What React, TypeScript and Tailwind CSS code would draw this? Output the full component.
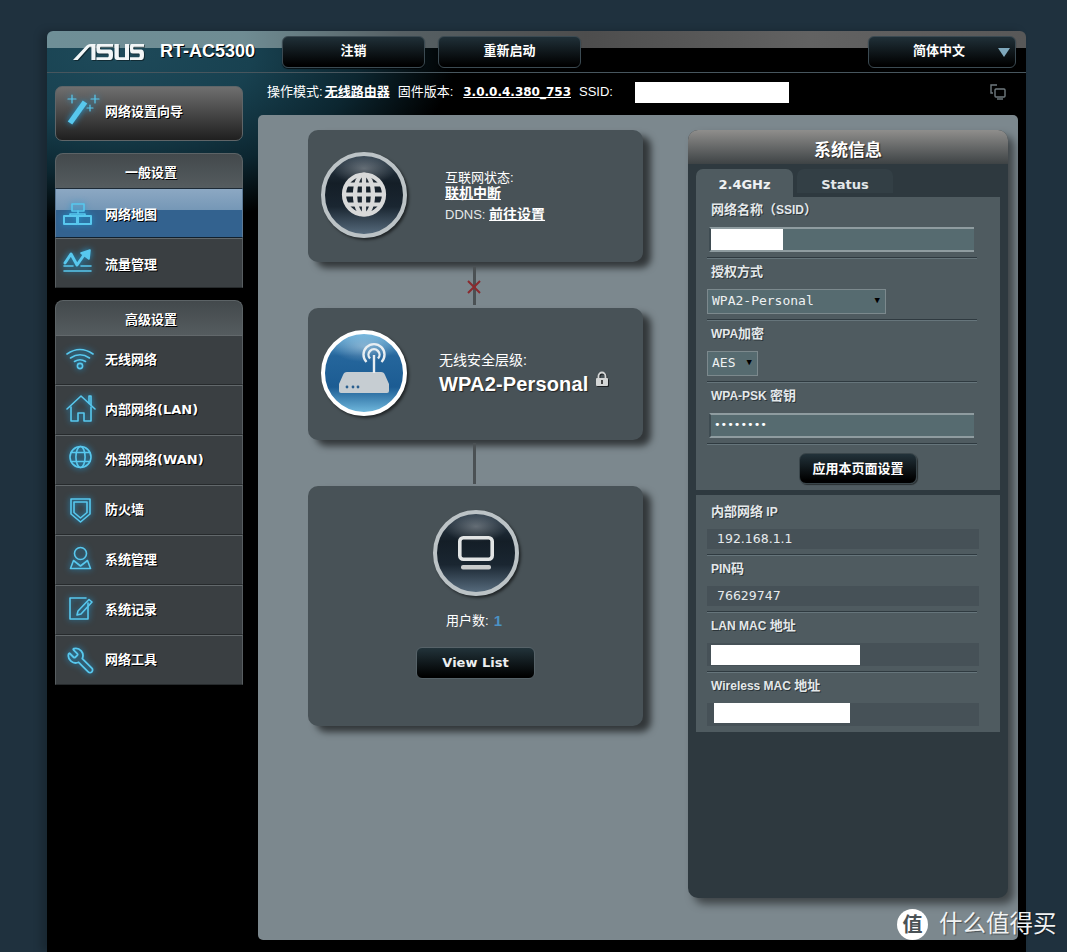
import { ReactNode } from "react";
import { Wrench } from "lucide-react";

const CJK = "font-['Liberation_Sans','Noto_Sans_CJK_SC',sans-serif]";
const WIDE = "font-['DejaVu_Sans','Noto_Sans_CJK_SC',sans-serif]";
const MONO = "font-['DejaVu_Sans_Mono','Noto_Sans_CJK_SC',monospace]";
const GLOW = "drop-shadow-[0_0_3px_#1f9ad6]";

function NavIcon({ children }: { children: ReactNode }) {
  return (
    <svg
      viewBox="0 0 40 40"
      className={`h-10 w-10 shrink-0 ${GLOW}`}
      fill="none"
      stroke="#58c8ee"
      strokeWidth="1.6"
      strokeLinejoin="round"
      strokeLinecap="round"
    >
      {children}
    </svg>
  );
}

const advancedItems: { label: string; icon: ReactNode }[] = [
  {
    label: "无线网络",
    icon: (
      <NavIcon>
        <path d="M7 14Q20 5 33 14" />
        <path d="M10.5 18Q20 11.5 29.5 18" />
        <path d="M14.5 21.5Q20 18 25.5 21.5" />
        <circle cx="20" cy="26" r="2.6" />
      </NavIcon>
    ),
  },
  {
    label: "内部网络(LAN)",
    icon: (
      <NavIcon>
        <path d="M7 19L21 6L35 19" />
        <path d="M29 13V6H31V15" />
        <path d="M11 17V31H18V23H24V31H31V17" />
      </NavIcon>
    ),
  },
  {
    label: "外部网络(WAN)",
    icon: (
      <NavIcon>
        <circle cx="20.5" cy="17" r="10.5" />
        <ellipse cx="20.5" cy="17" rx="4.6" ry="10.5" />
        <path d="M11 12.5H30M11 21.5H30" />
      </NavIcon>
    ),
  },
  {
    label: "防火墙",
    icon: (
      <NavIcon>
        <path d="M11 9H30V24L20.5 32L11 24Z" />
        <path d="M14 12H27V22.5L20.5 28L14 22.5Z" />
      </NavIcon>
    ),
  },
  {
    label: "系统管理",
    icon: (
      <NavIcon>
        <circle cx="20.5" cy="13.5" r="6" />
        <path d="M10.5 28.5L13.5 20.5L20.5 26L27.5 20.5L30.5 28.5Z" />
      </NavIcon>
    ),
  },
  {
    label: "系统记录",
    icon: (
      <NavIcon>
        <path d="M28 13V29H10V8H26" />
        <path d="M17 25L18 21L29 9.5L32 12L21 24Z" />
      </NavIcon>
    ),
  },
  {
    label: "网络工具",
    icon: (
      <div className={`flex h-10 w-10 shrink-0 items-center justify-center ${GLOW}`}>
        <Wrench size={29} strokeWidth={1.5} color="#58c8ee" className="-scale-x-100" />
      </div>
    ),
  },
];

function NavRow({ label, icon, active, low }: { label: string; icon: ReactNode; active?: boolean; low?: boolean }) {
  return (
    <div
      className={`flex h-[50px] items-center gap-[5px] border pl-[4px] ${
        active
          ? "border-t-[#1d2a36] border-b-[#12202c] border-x-[#5d7a96] bg-[linear-gradient(#8ca8c3_0%,#7597b6_44%,#33628f_44%,#33628f_100%)]"
          : "border-t-[#62686b] border-b-[#262a2c] border-x-[#585e61] bg-[#3a3f42]"
      }`}
    >
      {icon}
      <span className={`${WIDE} text-[13px] font-bold text-white [text-shadow:1px_1px_0_#000] ${low ? "pt-[3px]" : ""}`}>
        {label}
      </span>
    </div>
  );
}

function GroupHeader({ title }: { title: string }) {
  return (
    <div className="flex h-[35px] items-center justify-center rounded-t-[8px] border-x border-t border-[#5c6366] bg-[linear-gradient(#43494c,#555c5f)] pl-1 pt-[3px]">
      <span className="text-[13px] font-bold text-white [text-shadow:1px_1px_0_#000]">{title}</span>
    </div>
  );
}

function HeaderButton({ label, className }: { label: string; className: string }) {
  return (
    <div
      className={`flex h-[32px] items-center justify-center rounded-[6px] border border-[#3b4a52] bg-[linear-gradient(#203038,#000_95%)] pb-[2px] text-[13px] font-bold text-white shadow-[0_1px_1px_rgba(0,0,0,0.7)] ${className}`}
    >
      {label}
    </div>
  );
}

function Orb({ blue, className = "", children }: { blue?: boolean; className?: string; children: ReactNode }) {
  return (
    <div
      className={`h-[86px] w-[86px] shrink-0 rounded-full border-[4px] shadow-[2px_2px_3px_rgba(0,0,0,0.55)] ${className} ${
        blue
          ? "border-white bg-[radial-gradient(ellipse_42%_20%_at_50%_16%,rgba(255,255,255,0.35),transparent),linear-gradient(#6bb2dc_0%,#25669c_28%,#1c5c93_68%,#6fb7dc_100%)]"
          : "border-[#bcc3c6] bg-[radial-gradient(ellipse_42%_20%_at_50%_16%,rgba(255,255,255,0.3),transparent),linear-gradient(#2c3c4a_0%,#141e27_35%,#1a2631_65%,#566a7c_100%)]"
      }`}
    >
      {children}
    </div>
  );
}

function Card({ className, children }: { className: string; children: ReactNode }) {
  return (
    <div className={`rounded-[10px] bg-[#485257] shadow-[8px_6px_7px_rgba(0,0,0,0.6)] ${className}`}>{children}</div>
  );
}

function Label({ children, className = "" }: { children: ReactNode; className?: string }) {
  return (
    <div className={`flex items-center whitespace-pre pl-[4px] text-[13px] font-bold text-[#e4e8ea] [text-shadow:1px_1px_0_#2c3539] ${className}`}>
      {children}
    </div>
  );
}

function Latin({ children }: { children: ReactNode }) {
  return <span className="text-[12px]">{children}</span>;
}

function Divider() {
  return <div className="h-[2px] w-[270px] border-t border-[#2f3a40] bg-[#66757b]" />;
}

function TextInput({ children }: { children: ReactNode }) {
  return (
    <div className="ml-[2px] flex h-[25px] w-[265px] items-center border-y-2 border-l-2 border-y-[#8f9ca0] border-l-[#3f4c52] bg-[#566b70]">
      {children}
    </div>
  );
}

function SelectBox({ value, className }: { value: string; className: string }) {
  return (
    <div
      className={`flex h-[25px] items-center justify-between border border-[#7c898d] bg-[#566b70] pb-[1px] pl-[4px] ${MONO} text-[13px] text-[#eef1f2] ${className}`}
    >
      <span>{value}</span>
      <span className="text-[9px] text-black">▼</span>
    </div>
  );
}

function ValueBar({ tall, children }: { tall?: boolean; children: ReactNode }) {
  return (
    <div className={`flex w-[272px] items-center bg-[#465157] ${tall ? "h-[23px]" : "h-[20px]"}`}>{children}</div>
  );
}

function ValueText({ children }: { children: ReactNode }) {
  return <span className={`${WIDE} pl-[10px] text-[12.5px] text-[#e6eaec]`}>{children}</span>;
}

function WirelessTab() {
  return (
    <div className="bg-[#4f5b60] pl-[11px]">
      <Label className="h-[26px]">网络名称（<Latin>SSID</Latin>）</Label>
      <div className="mt-[4px]">
        <TextInput>
          <div className="h-[21px] w-[72px] bg-white" />
        </TextInput>
      </div>
      <div className="mt-[5px]"><Divider /></div>

      <Label className="h-[26px]">授权方式</Label>
      <div className="mt-[4px]"><SelectBox value="WPA2-Personal" className="w-[179px] pr-[5px]" /></div>
      <div className="mt-[5px]"><Divider /></div>

      <Label className="h-[26px]"><Latin>WPA</Latin>加密</Label>
      <div className="mt-[4px]"><SelectBox value="AES" className="w-[51px] pr-[5px]" /></div>
      <div className="mt-[5px]"><Divider /></div>

      <Label className="h-[26px]"><Latin>WPA-PSK </Latin>密钥</Label>
      <div className="mt-[4px]">
        <TextInput>
          <span className={`${MONO} pl-[3px] text-[11px] text-white`}>••••••••</span>
        </TextInput>
      </div>
      <div className="mt-[5px]"><Divider /></div>

      <div className="flex justify-center pb-[6px] pl-[9px] pt-[8px]">
        <div className="flex h-[31px] w-[118px] items-center justify-center rounded-[7px] border border-[#39454a] bg-[linear-gradient(#22323a,#000_90%)] text-[13px] font-bold text-white shadow-[1px_1px_1px_rgba(0,0,0,0.5)]">
          应用本页面设置
        </div>
      </div>
    </div>
  );
}

function DeviceInfo() {
  return (
    <div className="mt-[5px] bg-[#4f5b60] pb-[6px] pl-[11px]">
      <Label className="h-[34px]">内部网络<Latin> IP</Latin></Label>
      <ValueBar><ValueText>192.168.1.1</ValueText></ValueBar>
      <div className="mt-[5px]"><Divider /></div>

      <Label className="h-[26px]"><Latin>PIN</Latin>码</Label>
      <div className="mt-[4px]"><ValueBar><ValueText>76629747</ValueText></ValueBar></div>
      <div className="mt-[5px]"><Divider /></div>

      <Label className="h-[26px]"><Latin>LAN MAC </Latin>地址</Label>
      <div className="mt-[4px]">
        <ValueBar tall><div className="ml-[4px] h-[20px] w-[149px] bg-white" /></ValueBar>
      </div>
      <div className="mt-[5px]"><Divider /></div>

      <Label className="h-[26px]"><Latin>Wireless MAC </Latin>地址</Label>
      <div className="mt-[4px]">
        <ValueBar tall><div className="mb-[4px] ml-[7px] h-[20px] w-[136px] bg-white" /></ValueBar>
      </div>
    </div>
  );
}

export default function App() {
  return (
    <div className={`relative h-[952px] w-[1067px] overflow-hidden bg-[#1f313e] pl-[47px] pt-[31px] ${CJK}`}>
      <div className="h-[921px] w-[979px] rounded-t-[6px] shadow-[-6px_0_8px_rgba(0,0,0,0.2)] [background:linear-gradient(90deg,#6f8f97_0%,#6f8c93_20%,#566064_36%,#4d4d4d_55%,#626262_78%,#585858_100%)_top/100%_17px_no-repeat,radial-gradient(ellipse_340px_175px_at_70px_20px,#1e4a5a_0%,#184150_40%,#0c2630_72%,#000_100%)]">
        <header className="flex h-[42px] items-center border-b border-[#47565e] pl-[26px]">
          <svg viewBox="0 0 71 16" className="h-4 w-[71px] drop-shadow-[1px_1px_0_rgba(0,0,0,0.4)]" fill="#f2f6f7">
            <path d="M0 16L12 3.2C13.5 1.6 15 0 18 0H22.5V16H18.4V2.8H16.6L4.6 16Z" />
            <path d="M25 0H40V2.8H27.6C26.8 2.8 26.8 5.4 27.6 5.4H36C39.8 5.4 40 7 40 10.4C40 14 39.6 16 36 16H23.4V13.2H35C36 13.2 36 9.6 35 9.6H27C24 9.6 23.4 8 23.4 5C23.4 2 23.4 0 25 0Z" />
            <path d="M41.5 0H45.8V12C45.8 13 46 13.2 47 13.2H52V0H56V16H45C42 16 41.5 14.6 41.5 12Z" />
            <path d="M58.6 0H71V2.8H60.8C60 2.8 60 5.4 60.8 5.4H67.2C70.6 5.4 71 7 71 10.4C71 14 70.6 16 67.2 16H57V13.2H66C67 13.2 67 9.6 66 9.6H60C57.4 9.6 57 8 57 5C57 2 57 0 58.6 0Z" />
          </svg>
          <span className="ml-4 text-[18px] font-bold text-white [text-shadow:1px_1px_0_#000]">RT-AC5300</span>
          <HeaderButton label="注销" className="ml-[27px] w-[143px]" />
          <HeaderButton label="重新启动" className="ml-[13px] w-[143px]" />
          <div className="relative ml-auto mr-[10px]">
            <HeaderButton label="简体中文" className="w-[148px] pr-[6px]" />
            <span className="absolute right-[6px] top-[12px] h-0 w-0 border-x-[6px] border-t-[9px] border-x-transparent border-t-[#7fa8bc]" />
          </div>
        </header>

        <div className="flex">
          <aside className="ml-[8px] w-[188px] shrink-0 pt-[13px]">
            <div className="flex h-[55px] items-center gap-[5px] rounded-[7px] border border-[#5f6568] bg-[linear-gradient(#6f6f6f,#1f1f1f)] pl-[4px]">
              <NavIcon>
                <path d="M10 29L25 8" strokeWidth="5.5" strokeLinecap="butt" />
                <path d="M12 1V9M8 5H16M35 1V9M31 5H39M30 11V17M27 14H33" strokeWidth="1.2" />
              </NavIcon>
              <span className="pb-[3px] text-[13px] font-bold text-white [text-shadow:1px_1px_0_#000]">网络设置向导</span>
            </div>

            <div className="mt-[12px]">
              <GroupHeader title="一般设置" />
              <NavRow
                active
                low
                label="网络地图"
                icon={
                  <NavIcon>
                    <rect x="12" y="11" width="12" height="7" />
                    <path d="M18 18V21M10 23V21H25V23" />
                    <rect x="4" y="23" width="13" height="8" strokeWidth="2" />
                    <rect x="18" y="23" width="13" height="8" strokeWidth="2" />
                  </NavIcon>
                }
              />
              <NavRow
                low
                label="流量管理"
                icon={
                  <NavIcon>
                    <path d="M5 20L11 11L17 22L24 12" strokeWidth="3" />
                    <path d="M21 10L30 7L29 16Z" fill="#58c8ee" />
                    <path d="M4 23H13M21 23H31M4 28H31" strokeWidth="1.6" />
                  </NavIcon>
                }
              />
            </div>

            <div className="mt-[12px]">
              <GroupHeader title="高级设置" />
              {advancedItems.map((item) => (
                <NavRow key={item.label} label={item.label} icon={item.icon} />
              ))}
            </div>
          </aside>

          <main className="ml-[15px] w-[760px]">
            <div className="flex h-[42px] items-center pb-[4px] pl-[9px] text-[13px] text-white">
              <span>操作模式:</span>
              <span className="ml-[2px] font-bold underline">无线路由器</span>
              <span className="ml-[8px]">固件版本:</span>
              <span className={`${WIDE} ml-[10px] text-[12px] font-bold underline`}>3.0.0.4.380_753</span>
              <span className="ml-[8px]">SSID:</span>
              <div className="ml-[22px] h-[21px] w-[154px] bg-white" />
              <svg viewBox="0 0 18 18" className="ml-auto mr-[11px] h-[18px] w-[18px]" fill="none" stroke="#6f7a7f" strokeWidth="1.4">
                <path d="M8 2H2V10H4" />
                <rect x="6" y="6" width="10" height="8" rx="1" />
                <path d="M8 16H14" />
              </svg>
            </div>

            <div className="flex h-[825px] rounded-[5px] bg-[#7c888e] pl-[50px] pt-[15px]">
              <div className="w-[335px] shrink-0">
                <Card className="flex h-[132px] items-center pl-[13px]">
                  <Orb className="-mt-[2px]">
                    <svg viewBox="0 0 78 78" className="h-full w-full" fill="none" stroke="#d8d9d9" strokeWidth="4.2">
                      <circle cx="39" cy="38.5" r="20" />
                      <ellipse cx="39" cy="38.5" rx="9" ry="20" />
                      <path d="M39 18.5V58.5M19 38.5H59M22 28.5H56M22 48.5H56" />
                    </svg>
                  </Orb>
                  <div className="ml-[38px] text-white">
                    <div className="text-[13px] leading-[15px]">互联网状态:</div>
                    <div className="pt-[1px] text-[14px] font-bold leading-[15px] underline">联机中断</div>
                    <div className="mt-[5px] text-[13px] leading-[16px]">
                      <span className="text-[#e6e9ea]">DDNS: </span>
                      <span className="text-[14px] font-bold underline">前往设置</span>
                    </div>
                  </div>
                </Card>

                <div className="relative flex h-[46px] justify-center pb-[3px] pr-[3px] pt-[4px]">
                  <div className="h-full w-[3px] bg-[#4b5154]" />
                  <svg viewBox="0 0 14 14" className="absolute left-[159px] top-[18px] h-[14px] w-[14px]" fill="none" stroke="#8a2a2e" strokeWidth="2">
                    <path d="M1 1L13 13M13 1L1 13" />
                  </svg>
                </div>

                <Card className="flex h-[132px] items-center pl-[13px]">
                  <Orb blue className="-mt-[2px]">
                    <svg viewBox="0 0 78 78" className="h-full w-full">
                      <path d="M22 38H56Q59 38 60 41L64 50V57Q64 59 62 59H16Q14 59 14 57V50L18 41Q19 38 22 38Z" fill="#c6cdd2" />
                      <path d="M47.8 21H50.2V39H47.8Z" fill="#e8eef2" />
                      <path d="M45 24.5A5.5 5.5 0 1 1 53 24.5" fill="none" stroke="#e8eef2" strokeWidth="2.4" />
                      <path d="M41.5 28A10.5 10.5 0 1 1 56.5 28" fill="none" stroke="#e8eef2" strokeWidth="2.4" />
                      <circle cx="22" cy="53" r="1.4" fill="#2a5f8f" />
                      <circle cx="28" cy="53" r="1.4" fill="#2a5f8f" />
                      <circle cx="33" cy="53" r="1.4" fill="#2a5f8f" />
                    </svg>
                  </Orb>
                  <div className="ml-[32px] pb-[2px] text-white">
                    <div className="text-[14px] leading-[18px]">无线安全层级:</div>
                    <div className="mt-[3px] flex items-start">
                      <span className="text-[20px] font-bold leading-[24px] tracking-[0.15px] [text-shadow:1px_1px_1px_#222]">WPA2-Personal</span>
                      <svg viewBox="0 0 14 16" className="-mt-[1px] ml-[7px] h-4 w-[14px] drop-shadow-[1px_1px_0_rgba(0,0,0,0.6)]">
                        <path d="M3.5 8V5A3.5 3.5 0 0 1 10.5 5V8" fill="none" stroke="#d4d6d6" strokeWidth="1.8" />
                        <rect x="1" y="7" width="12" height="8" rx="1" fill="#d4d6d6" />
                        <rect x="6" y="9" width="2" height="4" fill="#444" />
                      </svg>
                    </div>
                  </div>
                </Card>

                <div className="flex h-[46px] justify-center pb-[2px] pr-[3px] pt-[3px]">
                  <div className="h-full w-[3px] bg-[#4b5154]" />
                </div>

                <Card className="flex h-[240px] flex-col items-center pt-[24px]">
                  <Orb>
                    <svg viewBox="0 0 78 78" className="h-full w-full" fill="none">
                      <rect x="22.8" y="23.8" width="32.4" height="21.4" rx="3.5" stroke="#e2e4e4" strokeWidth="3.6" />
                      <rect x="24" y="51" width="30" height="4.5" rx="2" fill="#c9cbcb" />
                    </svg>
                  </Orb>
                  <div className="mt-[16px] flex h-[18px] items-center pr-[3px] text-[13px] text-white">
                    <span>用户数:</span>
                    <span className="ml-[5px] text-[15px] font-bold text-[#4b92c4]">1</span>
                  </div>
                  <div className={`${WIDE} mt-[17px] flex h-[32px] w-[119px] items-center justify-center rounded-[6px] border border-[#566268] bg-[linear-gradient(#22333a,#000_95%)] text-[13px] font-bold text-[#eceeef]`}>
                    View List
                  </div>
                </Card>
              </div>

              <section className="ml-[45px] h-[768px] w-[320px] rounded-[10px] bg-[#2e393f] shadow-[6px_6px_8px_rgba(0,0,0,0.5)]">
                <div className="flex h-[34px] items-center justify-center rounded-t-[10px] bg-[linear-gradient(#8f8e8c,#3e4345)] pt-[8px] text-[17px] font-bold text-white [text-shadow:1px_1px_1px_#222]">
                  系统信息
                </div>
                <div className="px-[8px] pt-[5px]">
                  <div className={`${WIDE} flex items-start text-[13px] font-bold`}>
                    <div className="flex h-[28px] w-[97px] items-center justify-center rounded-t-[7px] bg-[#4f5b60] pt-[3px] text-[#f0f2f3]">2.4GHz</div>
                    <div className="ml-[4px] flex h-[24px] w-[96px] items-center justify-center rounded-t-[7px] bg-[#333f45] pt-[7px] text-[#e4e8ea]">Status</div>
                  </div>
                  <WirelessTab />
                  <DeviceInfo />
                </div>
              </section>
            </div>
          </main>
        </div>
      </div>

      {/* site mark pinned over the lower-right corner */}
      <div className="absolute left-[897px] top-[909px] flex items-center">
        <div className="flex h-[31px] w-[31px] items-center justify-center rounded-full bg-white text-[20px] font-bold leading-none text-[#4a5256]">值</div>
        <span className="ml-[11px] whitespace-nowrap text-[23.5px] leading-none text-[#f0f2f3] [text-shadow:1px_1px_1px_rgba(0,0,0,0.4)]">什么值得买</span>
      </div>
    </div>
  );
}
